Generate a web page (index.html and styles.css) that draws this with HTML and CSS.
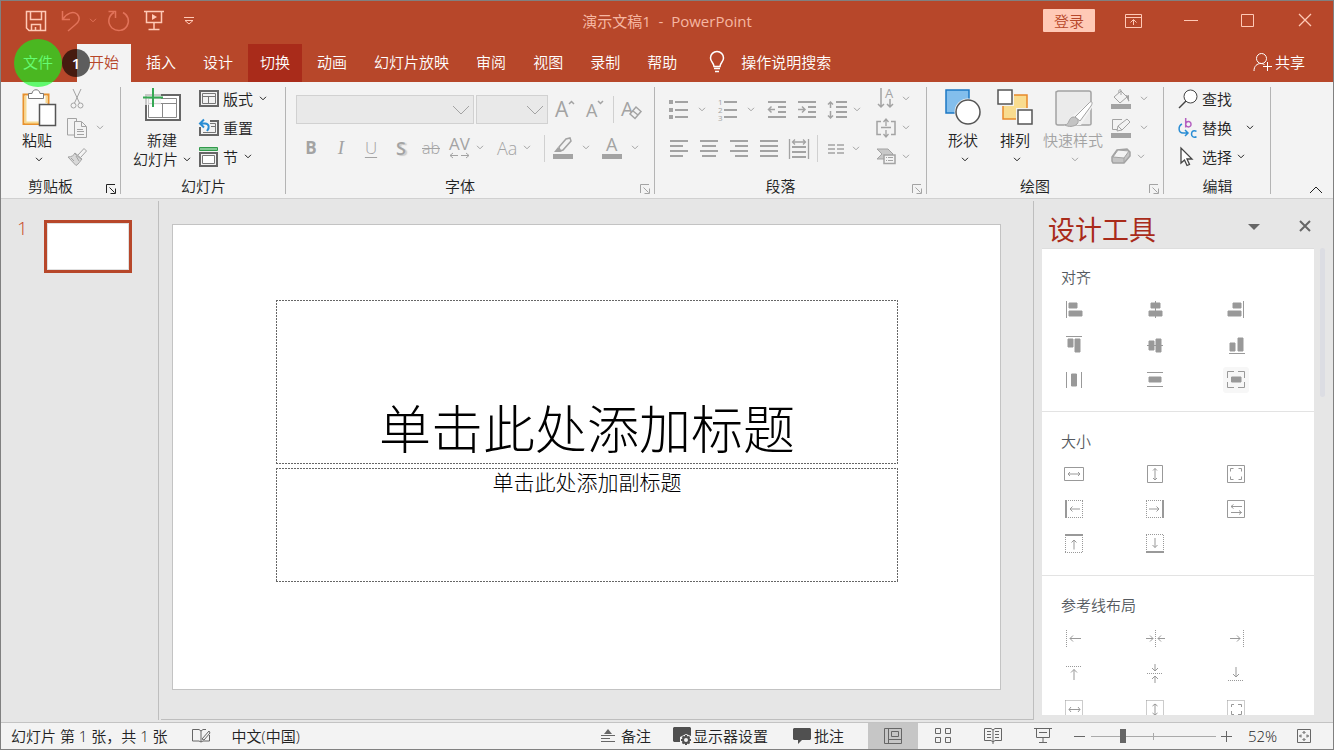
FILE: index.html
```html
<!DOCTYPE html>
<html lang="zh-CN">
<head>
<meta charset="utf-8">
<title>演示文稿1 - PowerPoint</title>
<link rel="stylesheet" href="styles.css">
</head>
<body>
<svg class="defs" aria-hidden="true">
  <symbol id="chev" viewBox="0 0 8 5"><path d="M1 .8L4 3.8L7 .8"/></symbol>
  <symbol id="launch" viewBox="0 0 10 10"><path d="M.5 9V.5H9M3.5 3.5L8.5 8.5M9.5 4.5V9.5H4.5"/></symbol>
  <symbol id="bigchev" viewBox="0 0 18 10"><path d="M1 1L9 9L17 1"/></symbol>
</svg>
<div class="app">
  <header class="titlebar">
    <div class="quick">
      <button aria-label="保存"><svg width="22" height="22"><path stroke-width="1.500" d="M1.500 1.500H20.500V20.500H4L1.500 18ZM5.500 1.500V9.500H16.500V1.500M6.500 20V14.500H15.500V20M10.500 17V20"/></svg></button>
      <button aria-label="撤消" class="dim undo"><svg width="20" height="22"><path stroke-width="1.500" d="M1.500 1V9.500H9M2 9C6 3 12 1 16 4C20 8 18 12 14 15L7 21"/></svg><svg class="chev"><use href="#chev"/></svg></button>
      <button aria-label="重复" class="dim redo"><svg width="22" height="22"><path stroke-width="1.500" d="M6 2.500C0 6 -1 13 4 18C9 22 16 21 19 16C22 11 20 5 15 2.500M.5 1.500H7.500V8"/></svg></button>
      <button aria-label="放映" class="show"><svg width="20" height="21"><path stroke-width="1.500" d="M0 1.500H20M2.500 2V12.500H17.500V2M10 13V19M4.500 19.500H15.500"/><path class="solid" d="M8 4L13 7L8 10Z"/></svg></button>
      <button aria-label="自定义快速访问工具栏" class="custom"><svg width="12" height="9"><path d="M1 1.500H11M2 4.500L6 8L10 4.500Z"/></svg></button>
    </div>
    <h1 class="doc-title">演示文稿1  -  PowerPoint</h1>
    <div class="window-tools">
      <button class="login">登录</button>
      <button class="win" aria-label="功能区显示选项"><svg width="18" height="14"><path d="M.5 .5H16.500V13.500H.5ZM1 3.500H16M8.500 11V6M5.500 8.500L8.500 5.500L11.500 8.500"/></svg></button>
      <button class="win" aria-label="最小化"><svg width="14" height="14"><path d="M0 6.500H14"/></svg></button>
      <button class="win" aria-label="最大化"><svg width="14" height="14"><path d="M.5 .5H12.500V12.500H.5Z"/></svg></button>
      <button class="win" aria-label="关闭"><svg width="14" height="14"><path stroke-width="1.300" d="M1 0L13 12M13 0L1 12"/></svg></button>
    </div>
  </header>
  <nav class="tabs">
    <a href="#" class="tab file">文件</a>
    <a href="#" class="tab active">开始</a>
    <a href="#" class="tab">插入</a>
    <a href="#" class="tab">设计</a>
    <a href="#" class="tab hot">切换</a>
    <a href="#" class="tab">动画</a>
    <a href="#" class="tab">幻灯片放映</a>
    <a href="#" class="tab">审阅</a>
    <a href="#" class="tab">视图</a>
    <a href="#" class="tab">录制</a>
    <a href="#" class="tab">帮助</a>
    <button class="tell"><svg width="16" height="22"><path stroke-width="1.500" d="M5 15.500C5 12 1.500 11 1.500 7A6.500 6.500 0 0 1 14.500 7C14.500 11 11 12 11 15.500ZM5 17.500H11M6 20.500H10"/></svg>操作说明搜索</button>
    <button class="share"><svg width="19" height="20"><circle cx="8.500" cy="6.500" r="5"/><path d="M1 19C1 14 4 11.500 8 11.500C9.500 11.500 10.500 12 11.500 12.500M14.500 10V19M10 14.500H19"/></svg>共享</button>
    <span class="click-spot"></span>
    <span class="step">1</span>
  </nav>

  <section class="ribbon">
    <div class="group clipboard">
      <div class="body">
        <button class="big"><span class="pic"><svg width="36" height="40">
          <path d="M2.500 6.500H27.500V36H2.500Z" fill="#fbfbfb" stroke="#e8912d" stroke-width="2"/><path d="M4.500 8V34.500H19" stroke="#f8d98f" stroke-width="2"/><path d="M25.500 8V15" stroke="#f8d98f" stroke-width="2"/>
          <path d="M7.500 5.500H11C11.500 .5 18.500 .5 19 5.500H22.500V10.500H7.500Z" fill="#fff" stroke="#7a7a7a"/><path d="M18.500 16.500H34.500V37.500H18.500Z" fill="#fff" stroke="#555" stroke-width="1.500"/></svg></span><span>粘贴</span><span><svg class="chev"><use href="#chev"/></svg></span></button>
        <div class="rows">
          <button class="row off" aria-label="剪切"><svg width="20" height="20"><path d="M6 0L12.500 14M14 0L7.500 14"/><circle cx="6.500" cy="16.500" r="2.500"/><circle cx="13.500" cy="16.500" r="2.500"/></svg></button>
          <button class="row off" aria-label="复制"><svg width="20" height="20"><path d="M7 17H.5V.5H9.500V4M7.500 3.500H14.500L19.500 8.500V19.500H7.500ZM14.500 4V8.500H19M10 11.500H16M10 13.500H17M10 16.500H17"/></svg><svg class="chev"><use href="#chev"/></svg></button>
          <button class="row off" aria-label="格式刷"><svg width="20" height="20"><path d="M1 10C5 10 7 8 8 6L15 12C13 14 12 17 9 18.500Z" fill="#d8d8d8"/><path d="M7 6L15 13M11 8L17 1.500L19.500 4L14 10M4 11L7 14M9 9L12 14"/></svg></button>
        </div>
      </div>
      <footer>剪贴板<button aria-label="剪贴板选项"><svg width="10" height="10"><use href="#launch"/></svg></button></footer>
    </div>
    <div class="group slides">
      <div class="body">
        <button class="big"><span class="pic"><svg width="40" height="36">
          <path d="M4 7H38V32H4Z" fill="#fff" stroke="#666" stroke-width="2"/><path d="M6.500 10.500H34.500V29.500H6.500ZM7 15.500H34M20.500 16V29" stroke="#888"/><path d="M0 0H19V17H0Z" fill="#f3f3f3" stroke="none" opacity=".7"/><path d="M11 0V19M1 9.500H21" stroke="#35a853" stroke-width="2"/></svg></span><span>新建</span><span>幻灯片<svg class="chev"><use href="#chev"/></svg></span></button>
        <div class="rows">
          <button class="row"><svg width="20" height="18"><path d="M1 1H19V16H1Z" stroke="#666" stroke-width="2"/><path stroke="#777" d="M3.500 3.500H16.500V13.500H3.500ZM3.500 6.500H16.500M9.500 6.500V13"/></svg>版式<svg class="chev"><use href="#chev"/></svg></button>
          <button class="row"><svg width="20" height="18"><path d="M1 8V16H19V2H11" stroke="#666" stroke-width="2"/><path stroke="#777" d="M4 13.500H16.500V4.500H11M12 7.500H16"/><path d="M1 4.500H6C10 5 11 8 8 12M5 .5L1 4.500L5 8.500" stroke="#2a8dd4" stroke-width="2"/></svg>重置</button>
          <button class="row"><svg width="20" height="20"><path d="M.5 .5H18.500V3.500H.5Z" fill="#82c993" stroke="#319a4b"/><path d="M1 6H18V19H1Z" stroke="#666" stroke-width="2"/><path stroke="#777" d="M3.500 8.500H15.500V16.500H3.500Z" fill="#fff"/></svg>节<svg class="chev"><use href="#chev"/></svg></button>
        </div>
      </div>
      <footer>幻灯片</footer>
    </div>
    <div class="group font">
      <div class="body stack off">
        <div class="line">
          <span class="combo name"><select aria-label="字体" disabled><option></option></select><svg width="18" height="10"><use href="#bigchev"/></svg></span>
          <span class="combo size"><select aria-label="字号" disabled><option></option></select><svg width="18" height="10"><use href="#bigchev"/></svg></span>
          <button class="tool" aria-label="增大字号"><svg width="22" height="24"><text x="1" y="19" font-size="21">A</text><path stroke-width="1.500" d="M15 6L17.500 3.500L20 6"/></svg></button>
          <button class="tool" aria-label="减小字号"><svg width="22" height="24"><text x="2" y="19" font-size="18">A</text><path stroke-width="1.500" d="M14 3L16.500 5.500L19 3"/></svg></button>
          <i class="sep"></i>
          <button class="tool" aria-label="清除格式"><svg width="22" height="24"><text x="0" y="18" font-size="20">A</text><path d="M9 16L15 9L20 13.500L14 20.500ZM12 13L17 17" fill="#f3f3f3" stroke-width="1.500"/></svg></button>
        </div>
        <div class="line">
          <button class="tool" aria-label="加粗"><b>B</b></button>
          <button class="tool" aria-label="倾斜"><em>I</em></button>
          <button class="tool" aria-label="下划线"><u>U</u></button>
          <button class="tool" aria-label="阴影"><span class="shade">S</span></button>
          <button class="tool" aria-label="删除线"><span class="strike">ab</span></button>
          <button class="tool split" aria-label="字符间距"><svg width="22" height="24"><text x="0" y="14" font-size="17">AV</text><path d="M1 19.500H9M4 17L1 19.500L4 22M12 19.500H20M17 17L20 19.500L17 22"/></svg><svg class="chev"><use href="#chev"/></svg></button>
          <button class="tool split case" aria-label="更改大小写"><span>Aa</span><svg class="chev"><use href="#chev"/></svg></button>
          <i class="sep"></i>
          <button class="tool split wide" aria-label="突出显示颜色"><svg width="20" height="22"><path stroke-width="1.500" d="M6 10L13 2L17 1L18 4L10 13L7 14Z"/><path class="solid" d="M5 10L9 14L7 15H1ZM0 17H20V22H0Z"/></svg><svg class="chev"><use href="#chev"/></svg></button>
          <button class="tool split wide" aria-label="字体颜色"><svg width="20" height="22"><text x="4" y="14" font-size="18">A</text><path class="solid" d="M0 17H20V22H0Z"/></svg><svg class="chev"><use href="#chev"/></svg></button>
        </div>
      </div>
      <footer>字体<button class="off" aria-label="字体选项"><svg width="10" height="10"><use href="#launch"/></svg></button></footer>
    </div>
    <div class="group para">
      <div class="body off">
        <div class="stack">
          <div class="line">
            <button class="tool split wide" aria-label="项目符号"><svg width="20" height="20"><path class="solid" d="M0 0H4V4H0ZM0 8H4V12H0ZM0 15H4V19H0Z"/><path class="thick" d="M6 2H19M6 10H19M6 17H19"/></svg><svg class="chev"><use href="#chev"/></svg></button>
            <button class="tool split wide" aria-label="编号"><svg width="20" height="24"><text x="0" y="7" font-size="8">1</text><text x="0" y="15" font-size="8">2</text><text x="0" y="23" font-size="8">3</text><path class="thick" d="M6 4H19M6 12H19M6 19H19"/></svg><svg class="chev"><use href="#chev"/></svg></button>
            <button class="tool" aria-label="减少缩进"><svg width="20" height="18"><path class="thick" d="M1 1H19M11 6H19M11 11H19M1 16H19"/><path stroke-width="1.500" d="M1.500 8.500H8M4.500 5.500L1.500 8.500L4.500 11.500"/></svg></button>
            <button class="tool" aria-label="增加缩进"><svg width="20" height="18"><path class="thick" d="M1 1H19M11 6H19M11 11H19M1 16H19"/><path stroke-width="1.500" d="M1 8.500H8M5 5.500L8 8.500L5 11.500"/></svg></button>
            <button class="tool split spacing" aria-label="行距"><svg width="20" height="20"><path class="thick" d="M9 2H20M9 7H20M9 12H20M9 17H20"/><path stroke-width="1.500" d="M3.500 2V8M1 4.500L3.500 2L6 4.500M3.500 11V18M1 15.500L3.500 18L6 15.500"/></svg><svg class="chev"><use href="#chev"/></svg></button>
          </div>
          <div class="line">
            <button class="tool" aria-label="左对齐"><svg width="20" height="18"><path class="thick" d="M1 1H19M1 6H14M1 11H19M1 16H14"/></svg></button>
            <button class="tool" aria-label="居中"><svg width="20" height="18"><path class="thick" d="M1 1H19M3 6H17M1 11H19M3 16H17"/></svg></button>
            <button class="tool" aria-label="右对齐"><svg width="20" height="18"><path class="thick" d="M1 1H19M6 6H19M1 11H19M6 16H19"/></svg></button>
            <button class="tool" aria-label="两端对齐"><svg width="20" height="18"><path class="thick" d="M1 1H19M1 6H19M1 11H19M1 16H19"/></svg></button>
            <button class="tool" aria-label="分散对齐"><svg width="20" height="22"><path class="thick" d="M3 9H17M3 14H17M3 19H17"/><path stroke-width="1.300" d="M.5 1V21M19.500 1V21M3.500 4H16.500M6 1.500L3.500 4L6 6.500M14 1.500L16.500 4L14 6.500"/></svg></button>
            <i class="sep"></i>
            <button class="tool split cols" aria-label="分栏"><svg width="16" height="10"><path stroke-width="1.500" d="M0 1H7M0 5H7M0 9H7M9 1H16M9 5H16M9 9H16"/></svg><svg class="chev"><use href="#chev"/></svg></button>
          </div>
        </div>
        <div class="rows">
          <button class="row" aria-label="文字方向"><svg width="20" height="21"><path stroke-width="1.500" d="M5 0V19M2 16L5 19L8 16M14 11V19M11 16L14 19L17 16"/><text x="9" y="10" font-size="13">A</text></svg><svg class="chev"><use href="#chev"/></svg></button>
          <button class="row" aria-label="对齐文本"><svg width="20" height="20"><path stroke-width="1.500" d="M5 3.500H1V16.500H5M15 3.500H19V16.500H15"/><path stroke-width="1.300" d="M5 9.500H15M10 1V8M7.500 4L10 1L12.500 4M10 12V19M7.500 16L10 19L12.500 16"/></svg><svg class="chev"><use href="#chev"/></svg></button>
          <button class="row" aria-label="转换为 SmartArt"><svg width="20" height="17"><path fill="#c8c8c8" d="M1 1H12L17 6L12 11H1L6 6Z"/><path fill="#f3f3f3" stroke-width="1.500" d="M8 7H19V15.500H8Z"/><path d="M10 9.500H11M12 9.500H17M10 12.500H11M12 12.500H17"/></svg><svg class="chev"><use href="#chev"/></svg></button>
        </div>
      </div>
      <footer>段落<button class="off" aria-label="段落选项"><svg width="10" height="10"><use href="#launch"/></svg></button></footer>
    </div>
    <div class="group draw">
      <div class="body">
        <button class="big"><span class="pic"><svg width="38" height="38"><path fill="#83beec" stroke="#1d78c4" stroke-width="1.500" d="M2 2H25V25H2Z"/><circle cx="24" cy="24" r="13.500" fill="#f3f3f3" stroke="none"/><circle cx="24" cy="24" r="12" fill="#fff" stroke="#555" stroke-width="1.500"/></svg></span><span>形状</span><span><svg class="chev"><use href="#chev"/></svg></span></button>
        <button class="big"><span class="pic"><svg width="38" height="38"><path fill="#f9dc8f" stroke="#e8892b" stroke-width="1.500" d="M7 7H31V31H7Z"/><path fill="#fff" stroke="#f3f3f3" stroke-width="4" d="M2 2H16V16H2ZM22 22H36V36H22Z"/><path fill="#fff" stroke="#555" stroke-width="1.500" d="M2 2H16V16H2ZM22 22H36V36H22Z"/></svg></span><span>排列</span><span><svg class="chev"><use href="#chev"/></svg></span></button>
        <button class="big off quickstyle"><span class="pic"><svg width="40" height="40"><path fill="#ebebeb" stroke-width="1.500" d="M5 3H36C37 3 38 4 38 5V36C38 37 37 37 36 37H5C4 37 3 36 3 35V4Z"/><path fill="#f3f3f3" d="M19 28L37 14L40 18L28 37L11 38C16 36 14 33 17 30Z" stroke="none"/><path fill="#fff" d="M22 29L36 15C39 12 40 15 38 18L27 33Z"/><path fill="#c4c4c4" d="M12 37C17 36 15 30 20 29C24 29 27 33 24 36C21 39 15 39 12 37Z"/></svg></span><span>快速样式</span><span><svg class="chev"><use href="#chev"/></svg></span></button>
        <div class="rows off">
          <button class="row" aria-label="形状填充"><svg width="20" height="20"><path d="M3 8L10 2L16 8L9 14ZM10 6V1C9 0 7 1 8 4M15 6L18 12"/><path class="solid" d="M0 15H20V20H0ZM15 7L18 6L18 13Z"/></svg><svg class="chev"><use href="#chev"/></svg></button>
          <button class="row" aria-label="形状轮廓"><svg width="20" height="20"><path d="M11 1.500H1.500V11.500H6M7 8L16 1L19 4L11 12L6 13ZM7 8L11 12"/><path class="solid" d="M0 15H20V20H0Z"/></svg><svg class="chev"><use href="#chev"/></svg></button>
          <button class="row effects" aria-label="形状效果"><svg width="20" height="17"><path fill="#c4c4c4" stroke-width="1.500" d="M1 9L6 2L16 1L19 4V8L13 15H2L1 13Z"/><path fill="#f3f3f3" d="M2 9L7 2L18 3L13 10Z"/><path d="M13 10V15"/></svg><svg class="chev"><use href="#chev"/></svg></button>
        </div>
      </div>
      <footer>绘图<button class="off" aria-label="绘图选项"><svg width="10" height="10"><use href="#launch"/></svg></button></footer>
    </div>
    <div class="group edit">
      <div class="body">
        <div class="rows">
          <button class="row"><svg width="20" height="20"><g stroke="#444"><circle cx="12.500" cy="7.500" r="6.500" fill="#fff"/><path d="M8 12L1 19" stroke-width="1.500"/></g></svg>查找</button>
          <button class="row replace"><svg width="20" height="20"><path stroke="#b45fc0" stroke-width="1.500" d="M7.700 0V9.500M7.700 6C8 3 13 2.500 13 6.200C13 10 8 9.500 7.700 6.500"/><path stroke="#2a8dd4" stroke-width="1.500" d="M4 6C0 8 0 15 5 15H10M7 12L10 15L7 18M18.500 13.300C16 12 13.500 13 13.500 16C13.500 19 16 19.800 18.500 18.700"/></svg>替换<svg class="chev"><use href="#chev"/></svg></button>
          <button class="row"><svg width="20" height="20"><path fill="#fff" stroke="#444" stroke-width="1.300" d="M3 1V16L6.500 13L9 18.500L11.500 17.500L9 12H14Z"/></svg>选择<svg class="chev"><use href="#chev"/></svg></button>
        </div>
      </div>
      <footer>编辑</footer>
    </div>
    <button class="collapse" aria-label="折叠功能区"><svg width="14" height="8"><path d="M1 7L7 1L13 7"/></svg></button>
  </section>

  <main class="work">
    <aside class="thumbs"><span>1</span><button class="thumb" aria-label="幻灯片 1"></button></aside>
    <section class="canvas">
      <div class="slide">
        <div class="holder title">单击此处添加标题</div>
        <div class="holder sub">单击此处添加副标题</div>
      </div>
    </section>
    <aside class="pane">
      <header><h2>设计工具</h2>
        <button aria-label="选项"><svg width="12" height="6"><path class="solid" d="M0 0H12L6 6Z"/></svg></button>
        <button aria-label="关闭"><svg width="12" height="12"><path stroke-width="2" d="M1 0L11 10M11 0L1 10"/></svg></button></header>
      <div class="pane-body">
        <div class="cards">
          <section><h3>对齐</h3><div class="icons">
            <button aria-label="左对齐"><svg viewBox="0 0 20 20"><path d="M2.500 1V18"/><path class="solid" d="M5 3H13V8H5ZM5 11H18V16H5Z"/></svg></button>
            <button aria-label="水平居中"><svg viewBox="0 0 20 20"><path d="M10.500 1V18"/><path class="solid" d="M6 3H15V8H6ZM4 11H17V16H4Z"/></svg></button>
            <button aria-label="右对齐"><svg viewBox="0 0 20 20"><path d="M17.500 1V18"/><path class="solid" d="M7 3H15V8H7ZM2 11H15V16H2Z"/></svg></button>
            <button aria-label="顶端对齐"><svg viewBox="0 0 20 20"><path d="M2 1.500H18"/><path class="solid" d="M4 4H9V12H4ZM11 4H16V17H11Z"/></svg></button>
            <button aria-label="垂直居中"><svg viewBox="0 0 20 20"><path d="M2 10.500H18"/><path class="solid" d="M4 6H9V15H4ZM11 4H16V17H11Z"/></svg></button>
            <button aria-label="底端对齐"><svg viewBox="0 0 20 20"><path d="M3 18.500H19"/><path class="solid" d="M4 8H9V16H4ZM12 3H17V16H12Z"/></svg></button>
            <button aria-label="横向分布"><svg viewBox="0 0 20 20"><path d="M2.500 2V18M17.500 2V18"/><path class="solid" d="M7.500 4H12.500V16H7.500Z"/></svg></button>
            <button aria-label="纵向分布"><svg viewBox="0 0 20 20"><path d="M2 2.500H18M2 16.500H18"/><path class="solid" d="M4 7H16V12H4Z"/></svg></button>
            <button aria-label="对齐幻灯片" class="soft"><svg viewBox="0 0 20 20"><path d="M1.500 8V1.500H8M12 1.500H18.500V8M18.500 12V17.500H12M8 17.500H1.500V12"/><path class="solid" d="M5.500 7H15V12H5.500Z"/></svg></button>
          </div></section>
          <section><h3>大小</h3><div class="icons">
            <button aria-label="等宽"><svg viewBox="0 0 20 20"><path d="M.5 3.500H19.500V16.500H.5ZM4 10H16M6 8L4 10L6 12M14 8L16 10L14 12"/></svg></button>
            <button aria-label="等高"><svg viewBox="0 0 20 20"><path d="M2.500 1.500H17.500V18.500H2.500ZM10 4.500V16M8 6.500L10 4.500L12 6.500M8 14L10 16L12 14"/></svg></button>
            <button aria-label="等大小"><svg viewBox="0 0 20 20"><path d="M1.500 1.500H18.500V18.500H1.500ZM4.500 7.500V4.500H7.500M12.500 4.500H15.500V7.500M15.500 12.500V15.500H12.500M7.500 15.500H4.500V12.500"/></svg></button>
            <button aria-label="向左拉伸"><svg viewBox="0 0 20 20"><path class="thick" d="M2 1V19"/><path class="dot" d="M4 1.500H19M18.500 2V19M4 18.500H19"/><path d="M6 10H16M8.500 7.500L6 10L8.500 12.500"/></svg></button>
            <button aria-label="向右拉伸"><svg viewBox="0 0 20 20"><path class="thick" d="M18 1V19"/><path class="dot" d="M1 1.500H17M1.500 2V19M1 18.500H17"/><path d="M4 10H14M11.500 7.500L14 10L11.500 12.500"/></svg></button>
            <button aria-label="交换大小"><svg viewBox="0 0 20 20"><path d="M1.500 1.500H18.500V18.500H1.500ZM5 7.500H16M7.500 5.500L5 7.500L7.500 9.500M5 13.500H15.500M13 11.500L15.500 13.500L13 15.500"/></svg></button>
            <button aria-label="向上拉伸"><svg viewBox="0 0 20 20"><path class="thick" d="M1 1H19"/><path class="dot" d="M1.500 3V18M18.500 3V18M1 18.500H19"/><path d="M10 15.500V6M7.500 8.500L10 6L12.500 8.500"/></svg></button>
            <button aria-label="向下拉伸"><svg viewBox="0 0 20 20"><path class="thick" d="M1 18H19"/><path class="dot" d="M1.500 1V17M18.500 1V17M1 .5H19"/><path d="M10 4V13.500M7.500 11L10 13.500L12.500 11"/></svg></button>
          </div></section>
          <section><h3>参考线布局</h3><div class="icons">
            <button aria-label="左参考线"><svg viewBox="0 0 20 20"><path class="dot" d="M2.500 2V19"/><path d="M6 10.500H17M9 7.500L6 10.500L9 13.500"/></svg></button>
            <button aria-label="垂直中线"><svg viewBox="0 0 20 20"><path class="dot" d="M10.500 2V19"/><path d="M1 10.500H8M5 7.500L8 10.500L5 13.500M20 10.500H13M16 7.500L13 10.500L16 13.500"/></svg></button>
            <button aria-label="右参考线"><svg viewBox="0 0 20 20"><path class="dot" d="M17.500 2V19"/><path d="M4 10.500H14M11 7.500L14 10.500L11 13.500"/></svg></button>
            <button aria-label="上参考线"><svg viewBox="0 0 20 20"><path class="dot" d="M2 3.500H18"/><path d="M10 17V6.500M7 9.500L10 6.500L13 9.500"/></svg></button>
            <button aria-label="水平中线"><svg viewBox="0 0 20 20"><path class="dot" d="M2 10.500H18"/><path d="M10 1V8M7 5L10 8L13 5M10 20V13M7 16L10 13L13 16"/></svg></button>
            <button aria-label="下参考线"><svg viewBox="0 0 20 20"><path class="dot" d="M2 17.500H18"/><path d="M10 4V14M7 11L10 14L13 11"/></svg></button>
            <button aria-label="宽度参考线"><svg viewBox="0 0 20 20"><path class="dot" d="M1.500 2.500H18.500V19H1.500Z"/><path d="M5 11.500H16M7 9L5 11.500L7 14M14 9L16 11.500L14 14"/></svg></button>
            <button aria-label="高度参考线"><svg viewBox="0 0 20 20"><path class="dot" d="M1.500 2.500H18.500V19H1.500Z"/><path d="M10 6V17M7.500 8L10 6L12.500 8M7.500 15L10 17L12.500 15"/></svg></button>
            <button aria-label="边框参考线"><svg viewBox="0 0 20 20"><path class="dot" d="M1.500 2.500H18.500V19H1.500Z"/><path d="M5.500 9V6.500H8M12 6.500H15.500V9M15.500 13V16.500H12M8 16.500H5.500V13"/></svg></button>
          </div></section>
        </div>
        <div class="scroll"></div>
      </div>
    </aside>
  </main>

  <footer class="status">
    <span class="count">幻灯片 第 1 张，共 1 张</span>
    <button aria-label="拼写检查"><svg width="19" height="16"><path d="M9 3V14L7 13H.5V1.500H7L9 3L11 1.500H14M17.500 7V13H11L9 14M10 11L17 3L18 5L12 12Z"/></svg></button>
    <button class="lang">中文(中国)</button>
    <div class="right">
      <button class="notes"><svg width="14" height="14"><path class="solid" d="M7 0L11 5H3Z"/><path d="M0 6.500H14M0 9.500H9M0 12.500H14"/></svg>备注</button>
      <button class="display"><svg width="21" height="20"><path class="solid" d="M2 1H18L19 2V10L14 8L8 11V16H2L1 15V2Z"/><circle cx="14" cy="14" r="3" stroke-width="2"/><path stroke-width="2" d="M14 9V11M14 17V19M9 14H11M17 14H19M10.500 10.500L12 12M16 16L17.500 17.500M10.500 17.500L12 16M16 12L17.500 10.500"/></svg>显示器设置</button>
      <button class="comment"><svg width="18" height="16"><path class="solid" d="M1 0H17L18 1V11L17 12H9L5 16V12H1L0 11V1Z"/></svg>批注</button>
      <button class="view on" aria-label="普通视图"><svg width="18" height="16"><path d="M.5 .5H17.500V15.500H.5ZM4.500 .5V15.500M4.500 11.500H17M7.500 3.500H14.500V8.500H7.500Z"/></svg></button>
      <button class="view" aria-label="幻灯片浏览"><svg width="18" height="16"><path d="M1.500 .5H6.500V5.500H1.500ZM11.500 .5H16.500V5.500H11.500ZM1.500 9.500H6.500V14.500H1.500ZM11.500 9.500H16.500V14.500H11.500Z"/></svg></button>
      <button class="view" aria-label="阅读视图"><svg width="18" height="16"><path d="M9 2L7 .5H.5V12.500H7L9 14L11 12.500H17.500V.5H11ZM9 2V16M3 3.500H7M3 6.500H7M3 9.500H7M11 3.500H15M11 6.500H15M11 9.500H15"/></svg></button>
      <button class="view" aria-label="幻灯片放映"><svg width="18" height="16"><path d="M0 .5H18M2.500 1V9.500H15.500V1M5 4.500H13M9 10V15M5 14.500H13"/></svg></button>
      <button class="zoom-step" aria-label="缩小"><svg width="11" height="11"><path d="M0 5.500H11"/></svg></button>
      <input type="range" aria-label="缩放" min="0" max="100" value="24">
      <button class="zoom-step" aria-label="放大"><svg width="11" height="11"><path d="M0 5.500H11M5.500 0V11"/></svg></button>
      <button class="percent">52%</button>
      <button class="fit" aria-label="适应窗口"><svg width="14" height="14"><path d="M.5 .5H13.500V13.500H.5ZM7 2.500V5M5.500 4L7 2.500L8.500 4M7 11.500V9M5.500 10L7 11.500L8.500 10M2.500 7H5M4 5.500L2.500 7L4 8.500M11.500 7H9M10 5.500L11.500 7L10 8.500"/></svg></button>
    </div>
  </footer>
</div>
</body>
</html>
```
FILE: styles.css
```css
* { box-sizing: border-box; }
body {
  margin: 0;
  font: 350 15px/20px "Open Sans", "Noto Sans CJK SC", sans-serif;
  color: #222;
}
button {
  border: 0;
  padding: 0;
  background: none;
  color: inherit;
  font: inherit;
  display: flex;
  align-items: center;
  justify-content: center;
  flex: none;
}
a { color: inherit; text-decoration: none; }
svg { display: block; flex: none; fill: none; stroke: currentColor; overflow: visible; }
svg text { fill: currentColor; stroke: none; font-weight: 400; }
.solid { fill: currentColor; stroke: none; }
.thick { stroke-width: 2; }
.dot { stroke-dasharray: 1 1; }
.defs { display: none; }
.chev { width: 8px; height: 5px; }
.off { color: #a3a3a3; }

.app {
  height: 100vh;
  border: 1px solid #808080;
  display: flex;
  flex-direction: column;
  overflow: hidden;
  background: #e6e6e6;
}

/* title bar */
.titlebar {
  flex: none;
  height: 43px;
  padding-bottom: 4px;
  display: grid;
  grid-template-columns: 1fr auto 1fr;
  align-items: center;
  background: #b7472a;
  color: #ffc9b6;
}
.quick { display: flex; align-items: center; padding-left: 24px; }
.quick .dim { color: #e2735a; }
.quick .undo { margin-left: 14px; gap: 8px; }
.quick .redo { margin-left: 11px; }
.quick .show { margin-left: 14px; }
.quick .custom { margin-left: 19px; }
.doc-title { margin: 0; font-size: 15px; font-weight: 400; white-space: pre; color: #f6b7a2; }
.window-tools { display: flex; align-items: center; justify-content: flex-end; }
.login { width: 52px; height: 23px; margin-right: 10px; border-radius: 1px; background: #ffc9b6; color: #b7472a; }
.win { width: 57px; height: 38px; }

/* tabs */
.tabs {
  position: relative;
  flex: none;
  height: 38px;
  display: flex;
  gap: 3px;
  background: #b7472a;
  color: #fff;
}
.tab { padding: 8px 12px; white-space: nowrap; }
.tab.file { padding-left: 22px; padding-right: 21px; }
.tab.active { background: #f3f3f3; color: #b7472a; }
.tab.hot { background: #a92b1a; }
.tell { margin-left: 17px; gap: 16px; }
.share { margin-left: auto; padding-right: 28px; gap: 3px; }
.tell, .share { padding-bottom: 2px; }
.click-spot {
  position: absolute;
  left: 13px;
  top: -5px;
  width: 48px;
  height: 48px;
  border-radius: 50%;
  background: rgba(6, 252, 28, .62);
}
.step {
  position: absolute;
  left: 61px;
  top: 5px;
  width: 28px;
  height: 28px;
  border-radius: 50%;
  background: rgba(0, 0, 0, .62);
  font-weight: 600;
  line-height: 28px;
  text-align: center;
}

/* ribbon */
.ribbon {
  flex: none;
  height: 117px;
  display: flex;
  background: #f3f3f3;
  border-bottom: 1px solid #d0d0d0;
}
.group { position: relative; flex: none; display: flex; flex-direction: column; }
.group::after {
  content: "";
  position: absolute;
  right: 0;
  top: 5px;
  bottom: 4px;
  width: 1px;
  background: #b4b4b4;
}
.group footer { position: relative; height: 22px; text-align: center; }
.group footer button { position: absolute; right: 5px; bottom: 4px; }
.body { flex: 1; display: flex; align-items: flex-start; }
.clipboard { width: 120px; }
.clipboard .body { padding-left: 15px; }
.slides { width: 165px; }
.slides .body { padding-left: 10px; }
.font { width: 369px; }
.para { width: 272px; }
.draw { width: 237px; }
.draw .body { padding-left: 10px; }
.clipboard footer, .font footer, .para footer, .draw footer { padding-right: 21px; }
.edit { width: 107px; }
.edit .body { padding-left: 14px; }

.big { flex-direction: column; justify-content: flex-start; width: 46px; padding-top: 6px; line-height: 19px; white-space: nowrap; }
.big .pic { height: 43px; display: flex; align-items: flex-start; justify-content: center; }
.big > span:last-child { display: flex; align-items: center; gap: 5px; min-height: 19px; }
.clipboard .big > span:nth-child(2) { padding-right: 4px; }
.slides .big { width: 62px; }
.draw .big { width: 52px; }
.draw .quickstyle { width: 64px; }
.draw .big > span:last-child { padding-left: 4px; }
.rows { display: flex; flex-direction: column; padding: 2px 0 0 5px; }
.slides .rows, .draw .rows { padding-left: 6px; }
.row { height: 29px; justify-content: flex-start; gap: 4px; white-space: nowrap; }
.row .chev { margin-left: 1px; }
.slides .row .chev { margin-left: 2px; }
.clipboard .row .chev { margin-left: 5px; }
.draw .row .chev { margin-left: 5px; }
.draw .effects .chev { margin-left: 2px; }
.edit .rows { padding-left: 0; }
.edit .replace .chev { margin-left: 10px; }
.para .rows { padding-left: 10px; }
.para .row .chev { margin-left: 2px; }

.stack { display: flex; flex-direction: column; gap: 10px; padding: 13px 0 0 9px; }
.body.stack { padding-left: 10px; }
.line { display: flex; align-items: center; height: 29px; }
.tool { width: 30px; height: 30px; font-size: 18px; }
.font .line + .line .tool { padding-bottom: 2px; }
.split { width: 40px; justify-content: flex-start; gap: 5px; padding-left: 3px; }
.wide { width: 49px; gap: 9px; padding-left: 5px; }
.sep { width: 1px; height: 27px; margin: 0 3px; background: #d0d0d0; flex: none; }
.para .split { padding-left: 5px; }
.para .spacing { width: 44px; gap: 6px; }
.para .cols { width: 44px; gap: 8px; padding-left: 7px; }
.case { margin-left: 8px; gap: 6px; width: 47px; }
.tool em { font-family: "Liberation Serif", serif; font-size: 19px; }
.tool b { font-size: 17px; }
.tool u { font-size: 17px; text-underline-offset: 3px; }
.shade { font-weight: 600; text-shadow: 2px 1px 1px #ccc; }
.strike { font-size: 16px; text-decoration: line-through; }
.combo { position: relative; height: 29px; margin-right: 2px; }
.combo select { appearance: none; width: 100%; height: 100%; border: 1px solid #c3c3c3; border-radius: 0; background: #e6e6e6; }
.combo svg { position: absolute; right: 4px; top: 10px; }
.combo.name { width: 178px; }
.combo.size { width: 72px; }
.collapse { margin: auto 10px 4px auto; }

/* workspace */
.work { flex: 1; min-height: 0; display: flex; border-bottom: 1px solid #c3c3c3; }
.thumbs {
  flex: none;
  width: 158px;
  margin: 2px 0;
  padding: 19px 0 0 16px;
  display: flex;
  align-items: flex-start;
  gap: 16px;
  border-right: 1px solid #bebebe;
  color: #c8482a;
  font-size: 19px;
}
.thumbs span { margin-top: -2px; }
.thumb { width: 88px; height: 53px; border: 3px solid #b7472a; background: #fff; box-shadow: inset 0 0 0 1px #e0e0e0; }
.canvas {
  flex: 1;
  min-width: 0;
  margin: 2px 0 2px 2px;
  padding: 23px 32px 0 11px;
  border-right: 1px solid #bebebe;
  border-bottom: 1px solid #bebebe;
}
.slide {
  aspect-ratio: 16 / 9;
  padding: 0 102px 0 103px;
  display: grid;
  grid-template-rows: 75fr 164fr 4fr 115fr 107fr;
  border: 1px solid #c3c3c3;
  background: #fff;
  color: #000;
}
.holder {
  display: flex;
  justify-content: center;
  white-space: nowrap;
  font-family: "Noto Sans CJK SC", sans-serif;
  font-weight: 300;
  background:
    repeating-linear-gradient(90deg, #666 0 2px, transparent 2px 3px) top / 100% 1px no-repeat,
    repeating-linear-gradient(90deg, #666 0 2px, transparent 2px 3px) bottom / 100% 1px no-repeat,
    repeating-linear-gradient(#666 0 2px, transparent 2px 3px) left / 1px 100% no-repeat,
    repeating-linear-gradient(#666 0 2px, transparent 2px 3px) right / 1px 100% no-repeat;
}
.holder.title { grid-row: 2; align-items: flex-end; font-size: 52px; line-height: 74px; }
.holder.sub { grid-row: 4; font-size: 21px; line-height: 26px; }

/* design pane */
.pane { flex: none; width: 299px; padding: 12px 8px 7px; display: flex; flex-direction: column; }
.pane header { display: flex; align-items: center; height: 37px; padding: 0 14px 0 6px; color: #666; }
.pane h2 { margin: 0 auto 0 0; font-size: 27px; line-height: 36px; font-weight: 400; color: #a92b1a; }
.pane header button + button { margin-left: 39px; }
.pane header button { padding-bottom: 5px; }
.pane-body { flex: 1; min-height: 0; display: flex; gap: 6px; }
.cards { width: 272px; overflow: hidden; background: #fff; border-top: 1px solid #dedede; }
.cards section { padding: 18px 19px 14px; border-bottom: 1px solid #e3e3e3; }
.cards section + section { padding-top: 19px; }
.cards h3 { margin: 0 0 5px; font-size: 15px; font-weight: 350; line-height: 20px; color: #555a60; }
.icons { display: grid; grid-template-columns: repeat(3, 26px); grid-auto-rows: 35px; column-gap: 55px; align-items: center; color: #999; }
.icons button { height: 26px; border-radius: 3px; }
.icons svg { width: 20px; height: 20px; stroke-linejoin: round; }
.icons .solid { stroke: currentColor; }
.soft { background: #f7f7f7; }
.scroll { width: 5px; height: 149px; border-radius: 3px; background: #dcdde3; }

/* status bar */
.status { flex: none; height: 26px; padding-left: 10px; display: flex; background: #f3f3f3; white-space: nowrap; }
.status svg { color: #666; }
.count { line-height: 26px; margin-right: 24px; }
.lang { margin-left: 21px; }
.right { margin-left: auto; padding-right: 22px; display: flex; align-items: center; }
.right > button { height: 26px; }
.notes { gap: 6px; margin-right: 21px; }
.display { margin-right: 25px; }
.comment { gap: 3px; margin-right: 24px; }
.display svg, .comment svg { color: #505050; }
.view { width: 50px; }
.view.on { background: #c6c6c6; }
.zoom-step { width: 11px; }
.view + .zoom-step { margin-left: 6px; }
.right input {
  appearance: none;
  width: 125px;
  height: 14px;
  margin: 0 5px 0 6px;
  background:
    linear-gradient(#aaa, #aaa) center / 100% 1px no-repeat,
    linear-gradient(#aaa, #aaa) center / 1px 7px no-repeat;
}
.right input::-webkit-slider-thumb { appearance: none; width: 6px; height: 14px; background: #666; }
.percent { width: 31px; margin: 0 19px 0 15px; }
```
